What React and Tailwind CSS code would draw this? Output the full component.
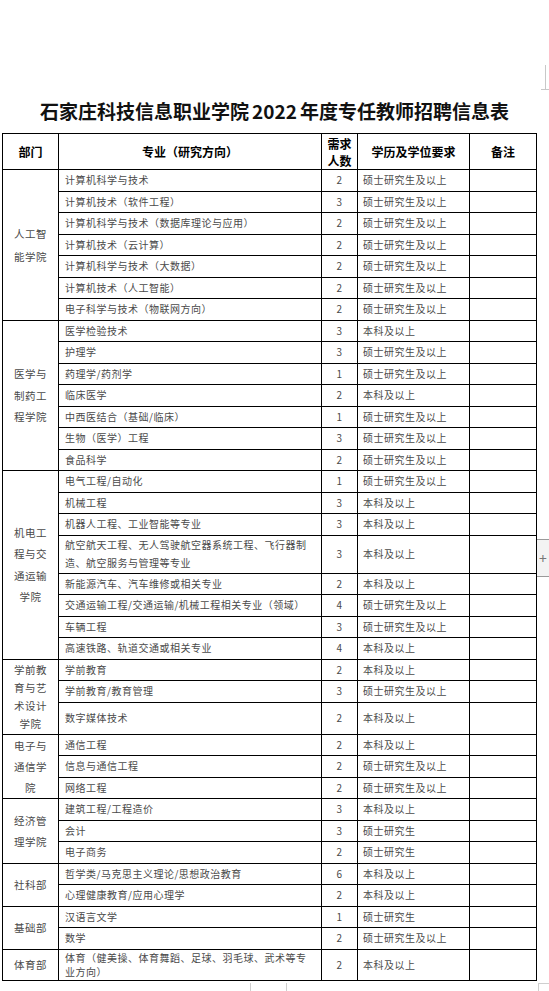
import React from 'react';

const ROW = 'h-[21.5px]';

const GROUPS = [
  {
    dept: ['人工智', '能学院'],
    lead: 'leading-[23px]',
    rows: [
      ['计算机科学与技术', '2', '硕士研究生及以上'],
      ['计算机技术（软件工程）', '3', '硕士研究生及以上'],
      ['计算机科学与技术（数据库理论与应用）', '2', '硕士研究生及以上'],
      ['计算机技术（云计算）', '2', '硕士研究生及以上'],
      ['计算机科学与技术（大数据）', '2', '硕士研究生及以上'],
      ['计算机技术（人工智能）', '2', '硕士研究生及以上'],
      ['电子科学与技术（物联网方向）', '2', '硕士研究生及以上'],
    ],
  },
  {
    dept: ['医学与', '制药工', '程学院'],
    lead: 'leading-[21.5px]',
    rows: [
      ['医学检验技术', '3', '本科及以上'],
      ['护理学', '3', '硕士研究生及以上'],
      ['药理学/药剂学', '1', '硕士研究生及以上'],
      ['临床医学', '2', '本科及以上'],
      ['中西医结合（基础/临床）', '1', '硕士研究生及以上'],
      ['生物（医学）工程', '3', '硕士研究生及以上'],
      ['食品科学', '2', '硕士研究生及以上'],
    ],
  },
  {
    dept: ['机电工', '程与交', '通运输', '学院'],
    lead: 'leading-[21.5px]',
    rows: [
      ['电气工程/自动化', '1', '硕士研究生及以上'],
      ['机械工程', '3', '本科及以上'],
      ['机器人工程、工业智能等专业', '3', '本科及以上'],
      [['航空航天工程、无人驾驶航空器系统工程、飞行器制', '造、航空服务与管理等专业'], '3', '本科及以上', 'h-[38px]', 'leading-[18px]'],
      ['新能源汽车、汽车维修或相关专业', '2', '本科及以上'],
      ['交通运输工程/交通运输/机械工程相关专业（领域）', '4', '硕士研究生及以上'],
      ['车辆工程', '3', '硕士研究生及以上'],
      ['高速铁路、轨道交通或相关专业', '4', '本科及以上'],
    ],
  },
  {
    dept: ['学前教', '育与艺', '术设计', '学院'],
    lead: 'leading-[18px]',
    rows: [
      ['学前教育', '2', '本科及以上'],
      ['学前教育/教育管理', '3', '硕士研究生及以上'],
      ['数字媒体技术', '2', '本科及以上', 'h-[32px]'],
    ],
  },
  {
    dept: ['电子与', '通信学', '院'],
    lead: 'leading-[21px]',
    rows: [
      ['通信工程', '2', '本科及以上'],
      ['信息与通信工程', '2', '硕士研究生及以上'],
      ['网络工程', '2', '硕士研究生及以上'],
    ],
  },
  {
    dept: ['经济管', '理学院'],
    lead: 'leading-[21px]',
    rows: [
      ['建筑工程/工程造价', '3', '本科及以上'],
      ['会计', '3', '硕士研究生'],
      ['电子商务', '2', '硕士研究生'],
    ],
  },
  {
    dept: ['社科部'],
    lead: 'leading-[20px]',
    rows: [
      ['哲学类/马克思主义理论/思想政治教育', '6', '本科及以上'],
      ['心理健康教育/应用心理学', '2', '本科及以上'],
    ],
  },
  {
    dept: ['基础部'],
    lead: 'leading-[20px]',
    rows: [
      ['汉语言文学', '1', '硕士研究生'],
      ['数学', '2', '硕士研究生及以上'],
    ],
  },
  {
    dept: ['体育部'],
    lead: 'leading-[20px]',
    rows: [
      [['体育（健美操、体育舞蹈、足球、羽毛球、武术等专', '业方向）'], '2', '本科及以上', 'h-[31px]', 'leading-[14px]'],
    ],
  },
];

const cell = 'border border-black p-0 align-middle';

export default function App() {
  return (
    <div
      className="relative w-[549px] h-[991px] overflow-hidden bg-white"
      style={{ fontFamily: '"Noto Sans CJK SC", "Noto Sans", sans-serif' }}
    >
      {/* page edge marks */}
      <div className="absolute left-[545px] top-[65px] w-px h-[25px] bg-[#c8c8c8]" />
      <div className="absolute left-[541px] top-[89px] w-[8px] h-px bg-[#c8c8c8]" />

      <div className="pt-[98px]">
        <h1 className="h-[26px] leading-[26px] text-center text-[19px] font-bold text-[#111] whitespace-nowrap">
          石家庄科技信息职业学院<span className="mx-[3px]">2022</span>年度专任教师招聘信息表
        </h1>

        <table className="mt-[9px] ml-[2px] w-[534px] table-fixed border-collapse">
          <colgroup>
            <col className="w-[56px]" />
            <col className="w-[263px]" />
            <col className="w-[36px]" />
            <col className="w-[112px]" />
            <col className="w-[67px]" />
          </colgroup>
          <thead>
            <tr className="h-[36px] text-[12px] font-bold text-black">
              <th className={cell}>部门</th>
              <th className={cell}>专业（研究方向）</th>
              <th className={`${cell} leading-[17px]`}>
                需求
                <br />
                人数
              </th>
              <th className={cell}>学历及学位要求</th>
              <th className={cell}>备注</th>
            </tr>
          </thead>
          <tbody className="text-[10px] tracking-[0.5px] text-[#4a4a4a]">
            {GROUPS.map(group =>
              group.rows.map(([major, count, edu, h, lead], i) => (
                <tr key={group.dept.join('') + i} className={h || ROW}>
                  {i === 0 && (
                    <td rowSpan={group.rows.length} className={`${cell} text-center text-[10.5px] ${group.lead}`}>
                      {group.dept.map(line => (
                        <div key={line}>{line}</div>
                      ))}
                    </td>
                  )}
                  <td className={`${cell} pl-[6px] ${lead || 'leading-[14px]'} whitespace-nowrap`}>
                    {Array.isArray(major) ? major.map(line => <div key={line}>{line}</div>) : major}
                  </td>
                  <td className={`${cell} text-center leading-[14px]`}>{count}</td>
                  <td className={`${cell} pl-[5px] leading-[14px] whitespace-nowrap`}>{edu}</td>
                  <td className={cell} />
                </tr>
              )),
            )}
          </tbody>
        </table>
      </div>

      {/* side zoom control */}
      <div className="absolute left-[537px] top-[539px] w-[12px] h-[38px] bg-[#f3f3f3] border-y border-[#9a9a9a] flex items-center justify-center text-[14px] leading-none text-[#777]">
        +
      </div>

      {/* next page edge */}
      <div className="absolute left-[250px] top-[983px] w-px h-[8px] bg-[#cfcfcf]" />
      <div className="absolute left-[286px] top-[983px] w-px h-[8px] bg-[#cfcfcf]" />
      <div className="absolute left-[538px] top-[983px] w-[11px] h-[8px] border-l border-t border-[#cfcfcf]" />
    </div>
  );
}
